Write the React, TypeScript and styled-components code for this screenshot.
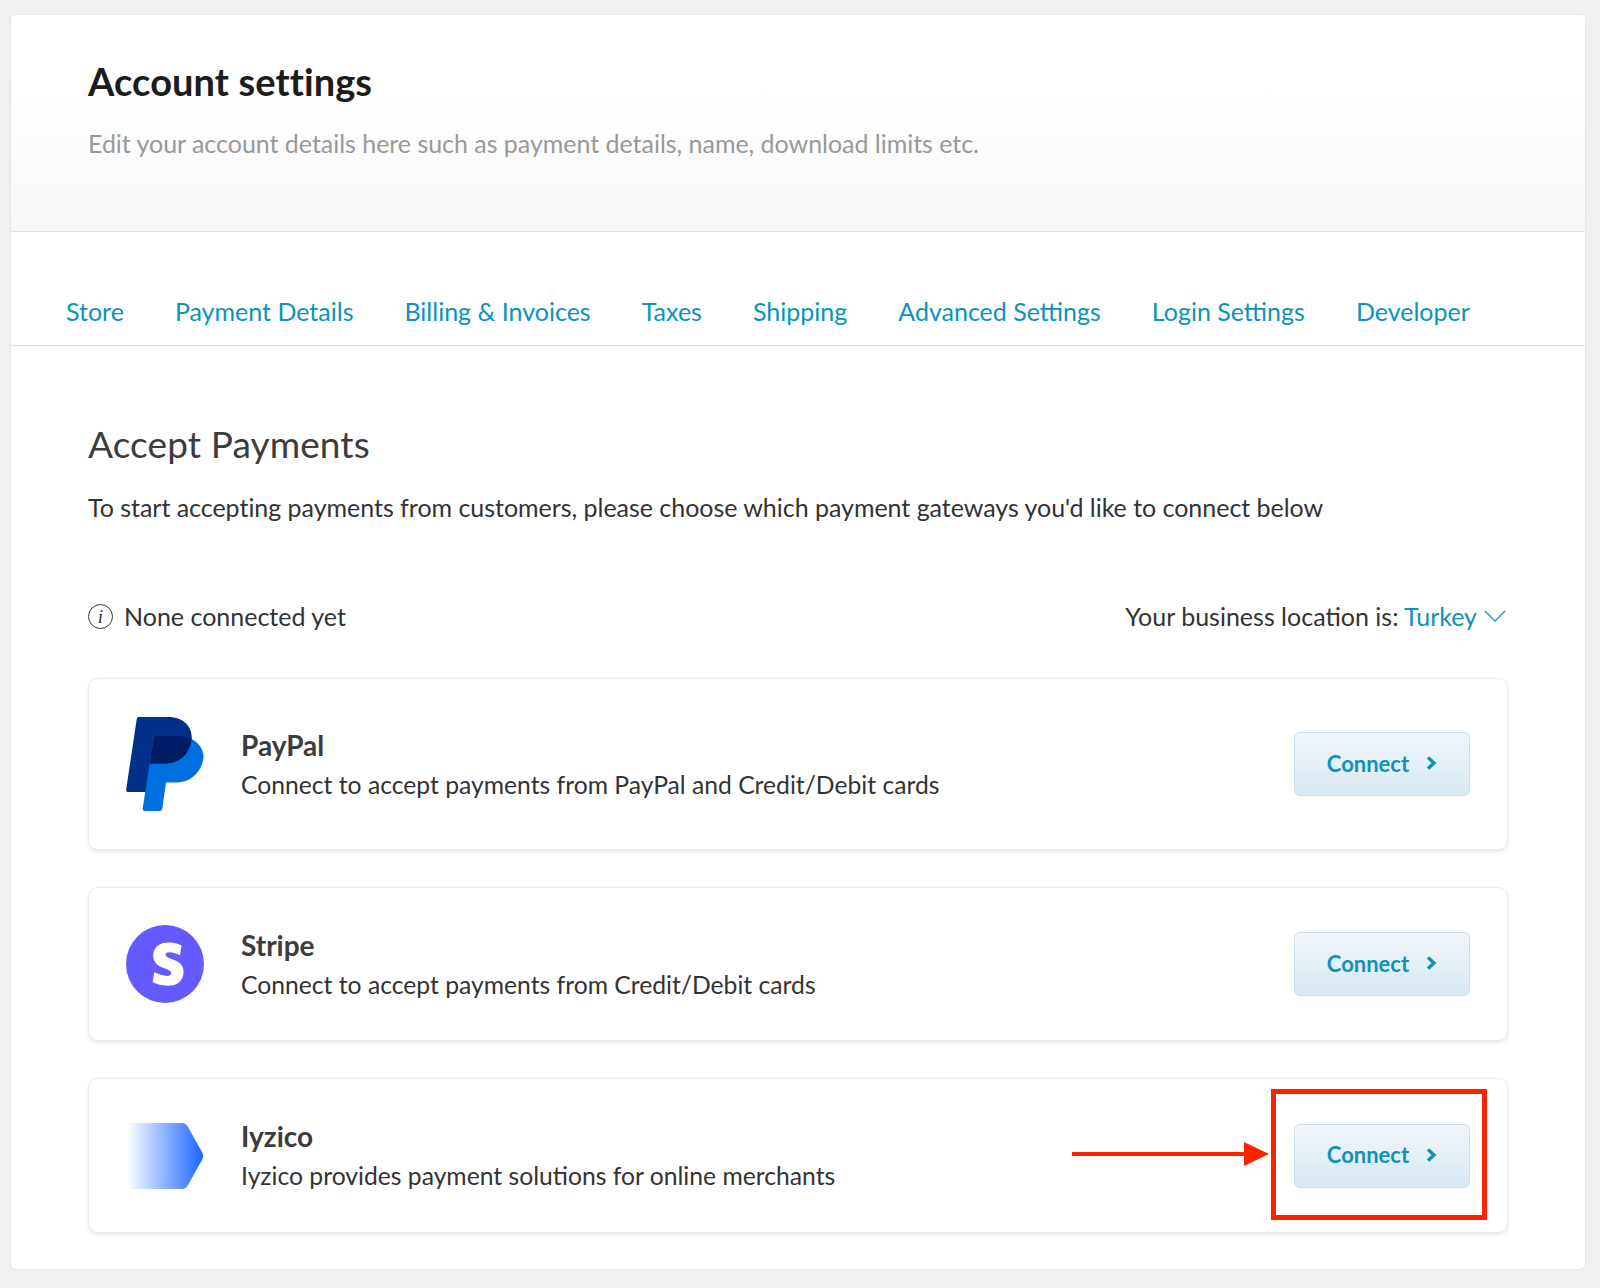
import React from 'react';
import styled, { createGlobalStyle } from 'styled-components';

const GlobalStyle = createGlobalStyle`
    html, body {
        margin: 0;
        padding: 0;
        background: #f0f0f0;
    }
    body {
        font-family: "Lato", "Liberation Sans", sans-serif;
        -webkit-font-smoothing: antialiased;
    }
    * {
        box-sizing: border-box;
    }
`;

const Page = styled.div`
    padding: 14px 14px 18px 10px;
    height: 1288px;
`;

const Panel = styled.div`
    height: 1256px;
    background: #fff;
    border: 1px solid #e6e6e6;
    border-radius: 6px;
    overflow: hidden;
`;

const Header = styled.header`
    height: 217px;
    padding: 44px 0 0 77px;
    background: linear-gradient(180deg, #ffffff 30%, #f8f8f8 100%);
    border-bottom: 1px solid #e2e2e2;
`;

const Title = styled.h1`
    margin: 0;
    font-size: 38px;
    line-height: 44px;
    font-weight: 700;
    letter-spacing: 0.1px;
    color: #1c1c1c;
`;

const Subtitle = styled.p`
    margin: 25px 0 0;
    font-size: 25px;
    line-height: 30px;
    letter-spacing: -0.03px;
    color: #999;
`;

const Tabs = styled.nav`
    display: flex;
    gap: 51px;
    height: 114px;
    padding: 64px 0 0 55px;
    border-bottom: 1px solid #e2e2e2;
`;

const Tab = styled.a`
    font-size: 25px;
    line-height: 30px;
    color: #0b93bb;
`;

const Body = styled.main`
    padding: 76px 77px 0;
`;

const SectionTitle = styled.h2`
    margin: 0;
    font-size: 37px;
    line-height: 44px;
    font-weight: 400;
    letter-spacing: 0.1px;
    color: #3c3c3c;
`;

const Intro = styled.p`
    margin: 26px 0 0;
    font-size: 25px;
    line-height: 30px;
    letter-spacing: -0.03px;
    color: #333;
`;

const StatusRow = styled.div`
    display: flex;
    justify-content: space-between;
    align-items: center;
    margin-top: 79px;
    font-size: 25px;
    line-height: 30px;
    color: #333;
`;

const StatusText = styled.div`
    display: flex;
    align-items: center;
    gap: 11px;
`;

const InfoBadge = styled.span`
    display: flex;
    align-items: center;
    justify-content: center;
    width: 25px;
    height: 25px;
    border: 1.5px solid #3a3a3a;
    border-radius: 50%;
    font-family: "Liberation Serif", serif;
    font-style: italic;
    font-size: 19px;
    line-height: 1;
`;

const Location = styled.div`
    display: flex;
    align-items: center;
    gap: 7px;
    margin-right: 2px;
`;

const LocationLink = styled.a`
    color: #0b93bb;
`;

const GatewayList = styled.div`
    display: flex;
    flex-direction: column;
    gap: 37px;
    margin-top: 47px;
`;

const GatewayCard = styled.section<{ $height: number }>`
    display: flex;
    align-items: center;
    height: ${({ $height }) => $height}px;
    padding: 0 37px;
    background: #fff;
    border: 1px solid #ececec;
    border-radius: 10px;
    box-shadow: 0 2px 4px rgba(0, 0, 0, 0.09);
`;

const LogoSlot = styled.div`
    display: flex;
    align-items: center;
    width: 115px;
    flex-shrink: 0;
`;

const GatewayInfo = styled.div`
    flex: 1;
`;

const GatewayName = styled.h3`
    margin: 0;
    font-size: 28px;
    line-height: 32px;
    font-weight: 700;
    color: #3c3c3c;
`;

const GatewayText = styled.p`
    margin: 9px 0 0;
    font-size: 24.7px;
    line-height: 30px;
    color: #333;
`;

const ButtonWrap = styled.div`
    position: relative;
`;

const ConnectButton = styled.button`
    display: flex;
    align-items: center;
    justify-content: center;
    gap: 17px;
    width: 176px;
    height: 64px;
    padding: 0 0 2px;
    background: linear-gradient(180deg, #f0f6fa 0%, #d9e8f2 100%);
    border: 1px solid #c9dfec;
    border-radius: 6px;
    font-family: inherit;
    font-size: 22px;
    font-weight: 700;
    color: #0b93bb;
`;

const Highlight = styled.div`
    position: absolute;
    top: -35px;
    right: -17px;
    bottom: -32px;
    left: -23px;
    border: 5px solid #ff2200;
    pointer-events: none;
`;

const ArrowMark = styled.svg`
    position: absolute;
    top: 17px;
    left: -222px;
`;

const Chevron = () => (
    <svg width="11" height="14" viewBox="0 0 11 14" fill="none">
        <path d="M2 1.5 L8 7 L2 12.5" stroke="#0b93bb" strokeWidth="3.4" />
    </svg>
);

const PayPalLogo = () => (
    <svg width="84" height="98" viewBox="139 375 250 295">
        <path
            d="M175 381 H265 C310 381 340 410 335 452 C328 495 295 522 250 522 H215 L203 607 H145 Q137 607 138 600 L170 386 Q171 381 175 381 Z"
            fill="#003087"
        />
        <path
            d="M222 437 H290 Q320 437 335 447 C360 460 375 485 370 510 C362 550 330 578 290 578 H258 L247 655 Q246 664 238 664 H195 Q186 664 188 655 L222 437 Z"
            fill="#0070e0"
        />
        <path
            d="M222 437 H290 Q320 437 335 447 C330 495 295 522 250 522 H209 Z"
            fill="#001c64"
        />
    </svg>
);

const StripeLogo = () => (
    <svg width="78" height="78" viewBox="0 0 78 78">
        <circle cx="39" cy="39" r="39" fill="#635bff" />
        <g transform="translate(20.5 17.5) scale(1.8)">
            <path
                d="M13.976 9.15c-2.172-.806-3.356-1.426-3.356-2.409 0-.831.683-1.305 1.901-1.305 2.227 0 4.515.858 6.09 1.631l.89-5.494C18.252.975 15.697 0 12.165 0 9.667 0 7.589.654 6.104 1.872 4.56 3.147 3.757 4.992 3.757 7.218c0 4.039 2.467 5.76 6.476 7.219 2.585.92 3.445 1.574 3.445 2.583 0 .98-.84 1.545-2.354 1.545-1.875 0-4.965-.921-6.99-2.109l-.9 5.555C5.175 22.99 8.385 24 11.714 24c2.641 0 4.843-.624 6.328-1.813 1.664-1.305 2.525-3.236 2.525-5.732 0-4.128-2.524-5.851-6.594-7.305h.003z"
                fill="#fff"
            />
        </g>
    </svg>
);

const IyzicoLogo = () => (
    <svg width="78" height="68" viewBox="0 0 78 68">
        <defs>
            <linearGradient id="iyzicoFade" x1="0" x2="1" y1="0" y2="0">
                <stop offset="0" stopColor="#1a66ff" stopOpacity="0" />
                <stop offset="1" stopColor="#1a66ff" />
            </linearGradient>
        </defs>
        <path
            d="M5 1 H56 Q60 1 62 5 L76.5 31 Q78 34 76.5 37 L62 63 Q60 67 56 67 H5 Q1 67 1 63 V5 Q1 1 5 1 Z"
            fill="url(#iyzicoFade)"
        />
    </svg>
);

const tabs = ['Store', 'Payment Details', 'Billing & Invoices', 'Taxes', 'Shipping', 'Advanced Settings', 'Login Settings', 'Developer'];

const App: React.FC = () => {
    return (
        <>
            <GlobalStyle />
            <Page>
                <Panel>
                    <Header>
                        <Title>Account settings</Title>
                        <Subtitle>Edit your account details here such as payment details, name, download limits etc.</Subtitle>
                    </Header>
                    <Tabs>
                        {tabs.map(tab => <Tab key={tab}>{tab}</Tab>)}
                    </Tabs>
                    <Body>
                        <SectionTitle>Accept Payments</SectionTitle>
                        <Intro>To start accepting payments from customers, please choose which payment gateways you'd like to connect below</Intro>
                        <StatusRow>
                            <StatusText>
                                <InfoBadge>i</InfoBadge>
                                None connected yet
                            </StatusText>
                            <Location>
                                <span>Your business location is: <LocationLink>Turkey</LocationLink></span>
                                <svg width="22" height="12" viewBox="0 0 22 12" fill="none">
                                    <path d="M1 1 L11 11 L21 1" stroke="#0b93bb" strokeWidth="1.3" />
                                </svg>
                            </Location>
                        </StatusRow>
                        <GatewayList>
                            <GatewayCard $height={172}>
                                <LogoSlot><PayPalLogo /></LogoSlot>
                                <GatewayInfo>
                                    <GatewayName>PayPal</GatewayName>
                                    <GatewayText>Connect to accept payments from PayPal and Credit/Debit cards</GatewayText>
                                </GatewayInfo>
                                <ButtonWrap>
                                    <ConnectButton>Connect <Chevron /></ConnectButton>
                                </ButtonWrap>
                            </GatewayCard>
                            <GatewayCard $height={154}>
                                <LogoSlot><StripeLogo /></LogoSlot>
                                <GatewayInfo>
                                    <GatewayName>Stripe</GatewayName>
                                    <GatewayText>Connect to accept payments from Credit/Debit cards</GatewayText>
                                </GatewayInfo>
                                <ButtonWrap>
                                    <ConnectButton>Connect <Chevron /></ConnectButton>
                                </ButtonWrap>
                            </GatewayCard>
                            <GatewayCard $height={155}>
                                <LogoSlot><IyzicoLogo /></LogoSlot>
                                <GatewayInfo>
                                    <GatewayName>Iyzico</GatewayName>
                                    <GatewayText>Iyzico provides payment solutions for online merchants</GatewayText>
                                </GatewayInfo>
                                <ButtonWrap>
                                    <ConnectButton>Connect <Chevron /></ConnectButton>
                                    <Highlight />
                                    <ArrowMark width="198" height="26" viewBox="0 0 198 26">
                                        <path d="M0 11 H172 V1 L197 13 L172 25 V15 H0 Z" fill="#ff2200" />
                                    </ArrowMark>
                                </ButtonWrap>
                            </GatewayCard>
                        </GatewayList>
                    </Body>
                </Panel>
            </Page>
        </>
    );
};

export default App;
